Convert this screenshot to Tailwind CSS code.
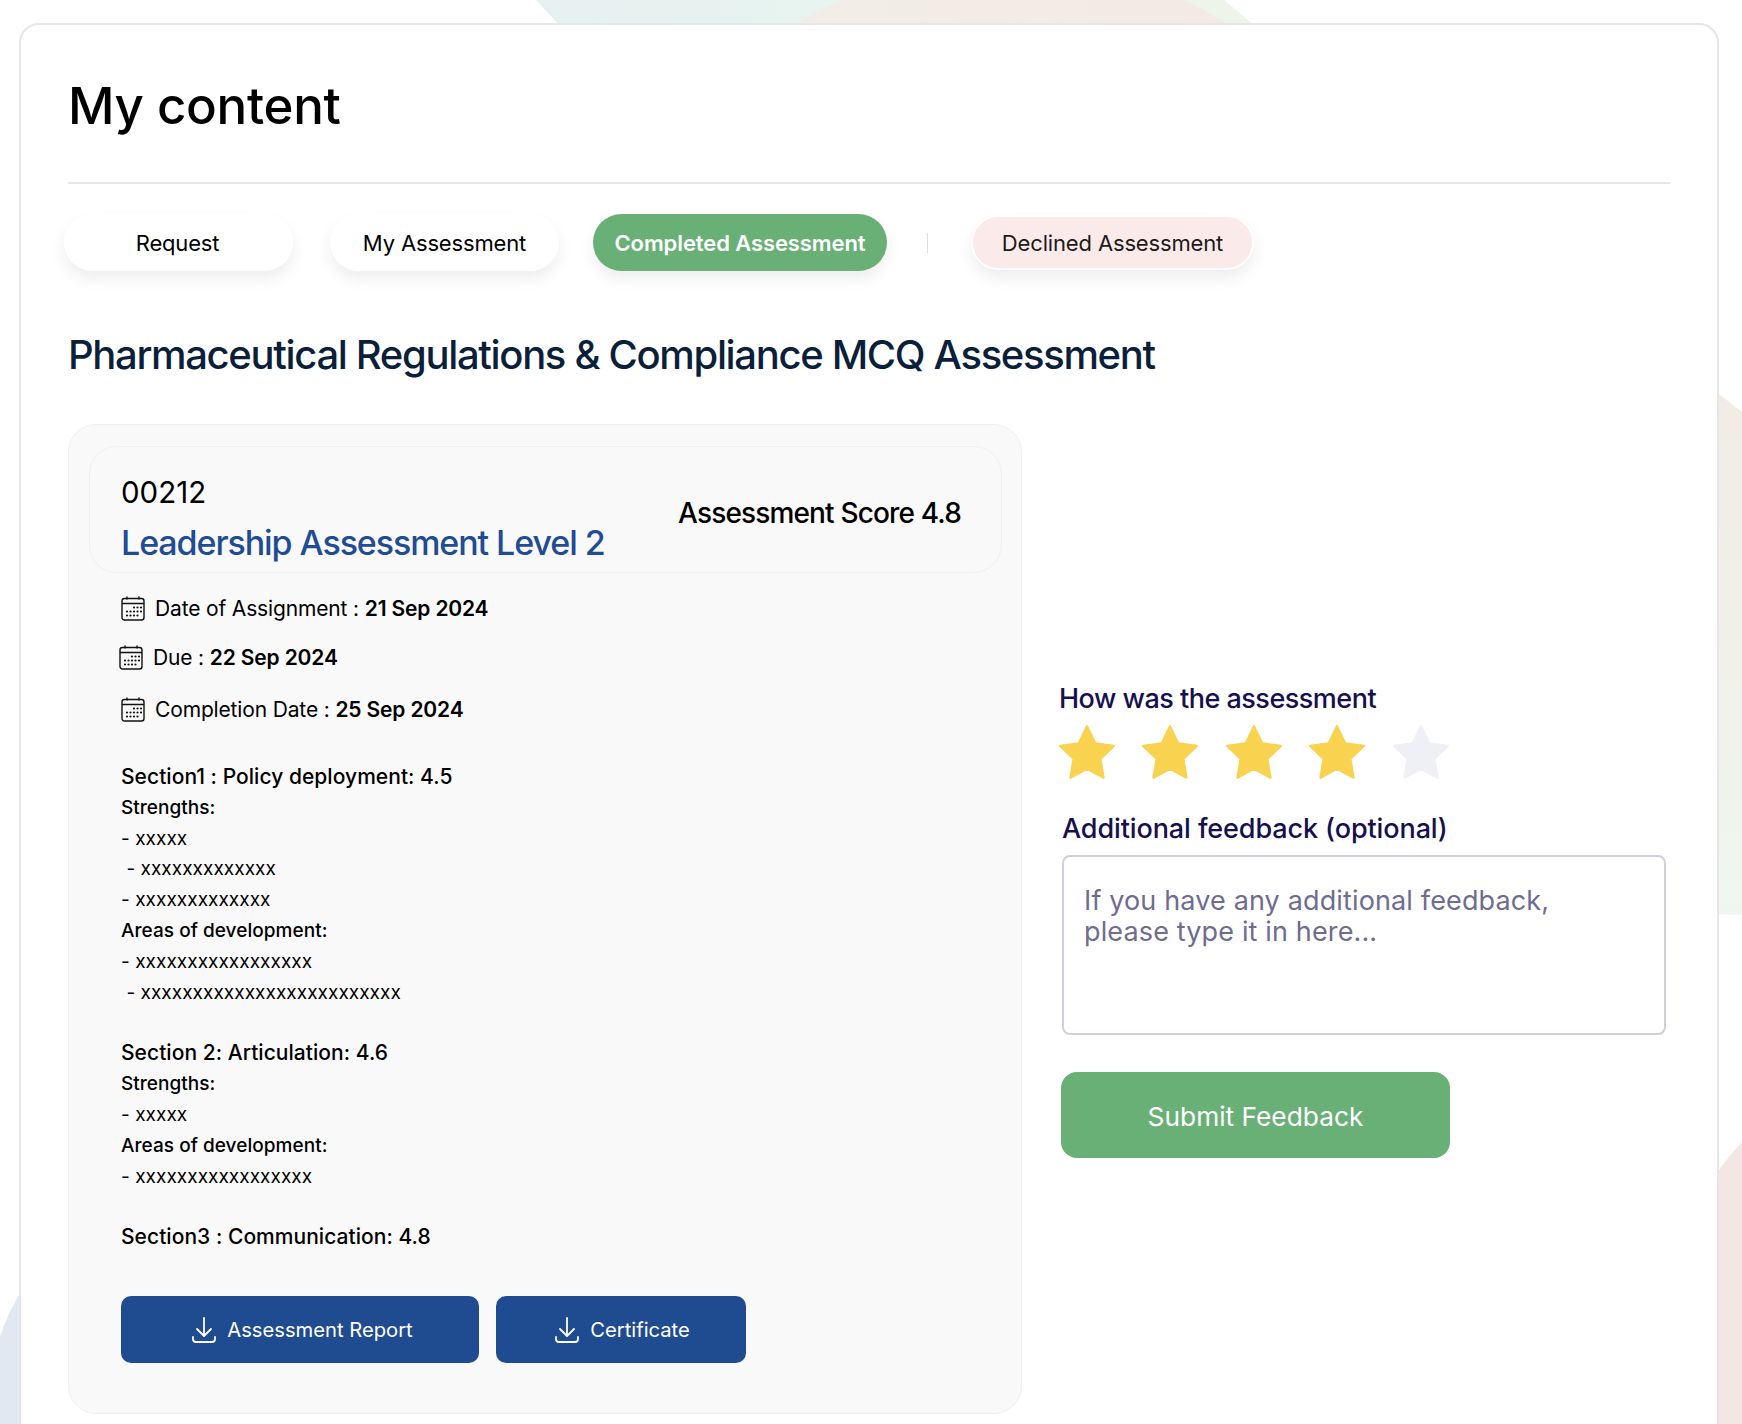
<!DOCTYPE html>
<html><head><meta charset="utf-8">
<script src="https://cdn.jsdelivr.net/npm/@tailwindcss/browser@4"></script>
</head>
<body class="bg-white">
<div class="relative w-[1742px] h-[1424px] overflow-hidden bg-white font-['Inter',sans-serif] text-black">
  <svg class="absolute inset-0" width="1742" height="1424" viewBox="0 0 1742 1424">
    <defs>
      <linearGradient id="t" x1="0" y1="0" x2="1" y2="0"><stop offset="0" stop-color="#e6f0f1"/><stop offset="0.5" stop-color="#e8f5ef"/><stop offset="1" stop-color="#eef4e9"/></linearGradient>
      <linearGradient id="p" x1="0" y1="0" x2="1" y2="0"><stop offset="0" stop-color="#f1ede6"/><stop offset="1" stop-color="#f4e9e5"/></linearGradient>
      <linearGradient id="r" x1="0" y1="0" x2="0" y2="1"><stop offset="0" stop-color="#f2ebe5"/><stop offset="0.45" stop-color="#f1f0e8"/><stop offset="1" stop-color="#eff6f0"/></linearGradient>
    </defs>
    <path d="M536 0 L564 30 L1260 30 L1224 0 Z" fill="url(#t)"/>
    <path d="M786 30 Q810 14 842 0 L1184 0 Q1210 12 1235 30 Z" fill="url(#p)"/>
    <path d="M1715 391 L1742 412 L1742 915 L1715 914 Z" fill="url(#r)"/>
    <path d="M1715 1175 Q1727 1158 1742 1142 L1742 1424 L1715 1424 Z" fill="#f4e7e3"/>
    <path d="M0 1337 Q8 1312 22 1290 L22 1424 L0 1424 Z" fill="#e2e8f2"/>
  </svg>
  <main class="absolute left-[19px] top-[23px] w-[1700px] h-[1500px] bg-white border-2 border-[#e6e6e8] rounded-[20px]">
    <div class="px-[47px]">
      <h1 class="pt-[51px] h-[159px] border-b-2 border-[#e7e7e7] text-[51px] leading-[60px] font-medium tracking-[-0.3px]">My content</h1>
      <div class="flex items-center mt-[30px] -ml-[4px] h-[57px]">
        <button class="pt-[2px] pr-[2px] w-[229px] h-[57px] rounded-full bg-white shadow-[0_8px_16px_rgba(0,0,0,0.07)] text-[22px] tracking-[-0.2px]">Request</button>
        <button class="pt-[2px] ml-[37px] w-[229px] h-[57px] rounded-full bg-white shadow-[0_8px_16px_rgba(0,0,0,0.07)] text-[22px] tracking-[-0.15px]">My Assessment</button>
        <button class="pt-[2px] ml-[34px] w-[294px] h-[57px] rounded-full bg-[#69b077] shadow-[0_8px_16px_rgba(0,0,0,0.07)] text-white font-semibold text-[22px] tracking-[-0.1px]">Completed Assessment</button>
        <span class="ml-[40px] w-px h-[20px] bg-[#dddddd]"></span>
        <button class="pt-[2px] ml-[43px] w-[283px] h-[55px] rounded-full bg-[#faeaea] border-2 border-white shadow-[0_8px_16px_rgba(0,0,0,0.07)] text-[22px] tracking-[-0.15px] text-[#1e1a1a]">Declined Assessment</button>
      </div>
      <h2 class="mt-[56px] text-[40px] leading-[56px] font-medium tracking-[-1.34px] text-[#0b1f3a]">Pharmaceutical Regulations &amp; Compliance MCQ Assessment</h2>
      <div class="flex mt-[41px]">
        <section class="w-[954px] h-[990px] shrink-0 rounded-[28px] border border-[#f0f0f0] bg-[#f9f9f9] pl-[20px] pr-[19px] pt-[21px]">
          <div class="flex items-start justify-between h-[127px] rounded-[28px] border border-[#f0f0f0] pl-[31px] pr-[40px]">
            <div>
              <div class="text-[29.5px] leading-[38px] mt-[26px]">00212</div>
              <div class="text-[34px] leading-[48px] mt-[8px] font-medium tracking-[-1.08px] text-[#1f4c94]">Leadership Assessment Level 2</div>
            </div>
            <div class="text-[28px] leading-[34px] mt-[49px] font-medium tracking-[-0.85px]">Assessment Score 4.8</div>
          </div>
          <div class="pl-[32px] text-[21px] tracking-[-0.15px]">
            <div class="flex items-center gap-[10px] h-[30px] mt-[21px]"><svg class="-mt-[2px]" width="24" height="25" viewBox="0 0 24 25" fill="none" stroke="#111" stroke-width="1.4"><rect x="1" y="2.500" width="22" height="21.500" rx="2.500"/><path d="M1 7.500h22M6 .5v3M18 .5v3"/><g fill="#111" stroke="none"><circle cx="13" cy="11.500" r="1.100"/><circle cx="16.500" cy="11.500" r="1.100"/><circle cx="20" cy="11.500" r="1.100"/><circle cx="6" cy="15.500" r="1.100"/><circle cx="9.500" cy="15.500" r="1.100"/><circle cx="13" cy="15.500" r="1.100"/><circle cx="16.500" cy="15.500" r="1.100"/><circle cx="20" cy="15.500" r="1.100"/><circle cx="6" cy="19.500" r="1.100"/><circle cx="9.500" cy="19.500" r="1.100"/><circle cx="13" cy="19.500" r="1.100"/><circle cx="16.500" cy="19.500" r="1.100"/></g></svg><span>Date of Assignment : <b class="font-semibold">21 Sep 2024</b></span></div>
            <div class="flex items-center gap-[10px] h-[30px] mt-[19px] -ml-[2px]"><svg class="-mt-[2px]" width="24" height="25" viewBox="0 0 24 25" fill="none" stroke="#111" stroke-width="1.4"><rect x="1" y="2.500" width="22" height="21.500" rx="2.500"/><path d="M1 7.500h22M6 .5v3M18 .5v3"/><g fill="#111" stroke="none"><circle cx="13" cy="11.500" r="1.100"/><circle cx="16.500" cy="11.500" r="1.100"/><circle cx="20" cy="11.500" r="1.100"/><circle cx="6" cy="15.500" r="1.100"/><circle cx="9.500" cy="15.500" r="1.100"/><circle cx="13" cy="15.500" r="1.100"/><circle cx="16.500" cy="15.500" r="1.100"/><circle cx="20" cy="15.500" r="1.100"/><circle cx="6" cy="19.500" r="1.100"/><circle cx="9.500" cy="19.500" r="1.100"/><circle cx="13" cy="19.500" r="1.100"/><circle cx="16.500" cy="19.500" r="1.100"/></g></svg><span>Due : <b class="font-semibold">22 Sep 2024</b></span></div>
            <div class="flex items-center gap-[10px] h-[30px] mt-[22px]"><svg class="-mt-[2px]" width="24" height="25" viewBox="0 0 24 25" fill="none" stroke="#111" stroke-width="1.4"><rect x="1" y="2.500" width="22" height="21.500" rx="2.500"/><path d="M1 7.500h22M6 .5v3M18 .5v3"/><g fill="#111" stroke="none"><circle cx="13" cy="11.500" r="1.100"/><circle cx="16.500" cy="11.500" r="1.100"/><circle cx="20" cy="11.500" r="1.100"/><circle cx="6" cy="15.500" r="1.100"/><circle cx="9.500" cy="15.500" r="1.100"/><circle cx="13" cy="15.500" r="1.100"/><circle cx="16.500" cy="15.500" r="1.100"/><circle cx="20" cy="15.500" r="1.100"/><circle cx="6" cy="19.500" r="1.100"/><circle cx="9.500" cy="19.500" r="1.100"/><circle cx="13" cy="19.500" r="1.100"/><circle cx="16.500" cy="19.500" r="1.100"/></g></svg><span>Completion Date : <b class="font-semibold">25 Sep 2024</b></span></div>
            <div class="mt-[37px] text-[19px] leading-[30.8px] tracking-[0.04px]">
              <div class="text-[21px] font-medium">Section1 : Policy deployment: 4.5</div>
              <div class="font-medium">Strengths:</div>
              <div>- xxxxx</div>
              <div>&nbsp;- xxxxxxxxxxxxx</div>
              <div>- xxxxxxxxxxxxx</div>
              <div class="font-medium">Areas of development:</div>
              <div>- xxxxxxxxxxxxxxxxx</div>
              <div>&nbsp;- xxxxxxxxxxxxxxxxxxxxxxxxx</div>
              <div class="text-[21px] font-medium mt-[30px]">Section 2: Articulation: 4.6</div>
              <div class="font-medium">Strengths:</div>
              <div>- xxxxx</div>
              <div class="font-medium">Areas of development:</div>
              <div>- xxxxxxxxxxxxxxxxx</div>
              <div class="text-[21px] font-medium mt-[30px]">Section3 : Communication: 4.8</div>
            </div>
            <div class="flex gap-[17px] mt-[43px] tracking-normal">
              <button class="flex items-center justify-center gap-[11px] pl-[5px] pt-[1px] w-[358px] h-[67px] rounded-[10px] bg-[#1f4b91] text-white text-[20.2px]"><svg width="24" height="28" viewBox="0 0 24 28" fill="none" stroke="#fff" stroke-width="1.800" stroke-linecap="round" stroke-linejoin="round"><path d="M12 2v17M5 13l7 7 7-7M1 21v2a3 3 0 0 0 3 3h16a3 3 0 0 0 3-3v-2"/></svg>Assessment Report</button>
              <button class="flex items-center justify-center gap-[11px] pl-[3px] pt-[1px] w-[250px] h-[67px] rounded-[10px] bg-[#1f4b91] text-white text-[20.2px]"><svg width="24" height="28" viewBox="0 0 24 28" fill="none" stroke="#fff" stroke-width="1.800" stroke-linecap="round" stroke-linejoin="round"><path d="M12 2v17M5 13l7 7 7-7M1 21v2a3 3 0 0 0 3 3h16a3 3 0 0 0 3-3v-2"/></svg>Certificate</button>
            </div>
          </div>
        </section>
        <aside class="ml-[37px] pt-[255px] w-[620px] text-[#16104f]">
          <div class="text-[27px] leading-[40px] font-medium tracking-[-0.5px]">How was the assessment</div>
          <div class="flex gap-[27.4px] mt-[6px]">
            <svg width="56" height="54" viewBox="0 0 24 23" fill="#f9d24f"><path d="M12 .5l3.500 7.300 8 1.100-5.800 5.600 1.400 8-7.100-3.800-7.100 3.800 1.400-8L.5 8.900l8-1.100z" stroke="#f9d24f" stroke-linejoin="round"/></svg>
            <svg width="56" height="54" viewBox="0 0 24 23" fill="#f9d24f"><path d="M12 .5l3.500 7.300 8 1.100-5.800 5.600 1.400 8-7.100-3.800-7.100 3.800 1.400-8L.5 8.900l8-1.100z" stroke="#f9d24f" stroke-linejoin="round"/></svg>
            <svg width="56" height="54" viewBox="0 0 24 23" fill="#f9d24f"><path d="M12 .5l3.500 7.300 8 1.100-5.800 5.600 1.400 8-7.100-3.800-7.100 3.800 1.400-8L.5 8.900l8-1.100z" stroke="#f9d24f" stroke-linejoin="round"/></svg>
            <svg width="56" height="54" viewBox="0 0 24 23" fill="#f9d24f"><path d="M12 .5l3.500 7.300 8 1.100-5.800 5.600 1.400 8-7.100-3.800-7.100 3.800 1.400-8L.5 8.900l8-1.100z" stroke="#f9d24f" stroke-linejoin="round"/></svg>
            <svg width="56" height="54" viewBox="0 0 24 23" fill="#eff0f6"><path d="M12 .5l3.500 7.300 8 1.100-5.800 5.600 1.400 8-7.100-3.800-7.100 3.800 1.400-8L.5 8.900l8-1.100z" stroke="#eff0f6" stroke-linejoin="round"/></svg>
          </div>
          <div class="ml-[3px] mt-[30px] text-[27px] leading-[40px] font-medium tracking-[-0.1px]">Additional feedback (optional)</div>
          <div class="ml-[3px] mt-[6px] w-[604px] h-[180px] rounded-[8px] border-2 border-[#d0d0dc] px-[20px] pt-[28px] text-[27px] leading-[31px] tracking-[0.14px] text-[#6f6c90]">If you have any additional feedback,<br>please type it in here...</div>
          <button class="ml-[2px] mt-[37px] pt-[3px] w-[389px] h-[86px] rounded-[16px] bg-[#69b077] text-white text-[26.3px]">Submit Feedback</button>
        </aside>
      </div>
    </div>
  </main>
</div>
</body></html>
